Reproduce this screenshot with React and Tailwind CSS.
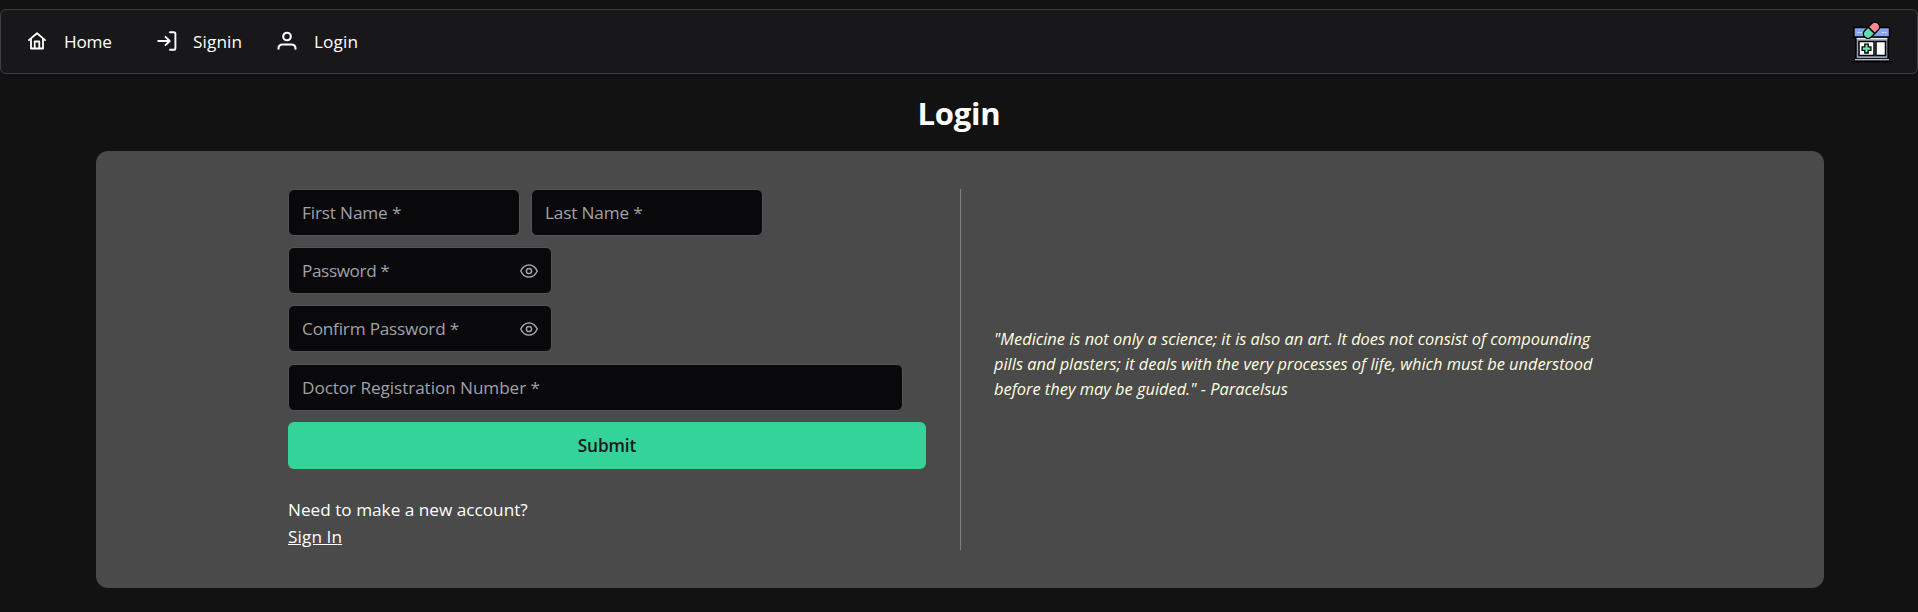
const field =
  "flex h-[47px] items-center justify-between rounded-md border border-[#52525b] bg-[#09090b] px-[13px] text-[17.2px] text-[#a1a1aa]";

function HomeIcon() {
  return (
    <svg className="size-[18px] shrink-0" viewBox="0 0 18 18" fill="none" stroke="#fff" strokeWidth="1.8" strokeLinejoin="round" strokeLinecap="round">
      <path d="M.9 8.100 9 1.300l8.100 6.800M3 6.800v9.700h12V6.800M6.700 16.500V9.500h4.600v7" />
    </svg>
  );
}

function SigninIcon() {
  return (
    <svg className="size-5 shrink-0" viewBox="0 0 20 20" fill="none" stroke="#fff" strokeWidth="1.900" strokeLinejoin="round" strokeLinecap="round">
      <path d="M1.200 10h11.300M8.500 5.800l4.200 4.200-4.200 4.200M13 1.200h3.800q1.600 0 1.600 1.600v14.400q0 1.600-1.600 1.600H13" />
    </svg>
  );
}

function UserIcon() {
  return (
    <svg className="size-5 shrink-0" viewBox="0 0 20 20" fill="none" stroke="#fff" strokeWidth="2.100" strokeLinecap="round">
      <circle cx="10" cy="5.500" r="3.800" />
      <path d="M1.500 17.800v-.5q0-3.800 4.500-3.800h8q4.500 0 4.500 3.800v.5" />
    </svg>
  );
}

function EyeIcon() {
  return (
    <svg className="h-[14px] w-[18px] shrink-0" viewBox="0 0 18 14" fill="none" stroke="#a1a1aa" strokeWidth="1.500">
      <path d="M.8 7C2.500 3 5.300.9 9 .9S15.500 3 17.200 7C15.500 11 12.700 13.100 9 13.100S2.500 11 .8 7Z" />
      <circle cx="9" cy="7" r="2.600" />
    </svg>
  );
}

function PharmacyLogo() {
  return (
    <svg className="h-[42px] w-[42px]" viewBox="0 0 42 42">
      <path d="M5 16h32v22H5z" fill="#98a2b0" stroke="#000" strokeWidth="1.400" />
      <path d="M5.700 16.500h30.600v1.800H5.700z" fill="#e6ebf2" />
      <path d="M3 6.500h35.500v9.500H3z" fill="#82a6f2" stroke="#000" strokeWidth="1.400" />
      <path d="M6.500 11.500h4.500M31 11.500h4.500" stroke="#dbe7ff" strokeWidth="1.200" strokeDasharray="2 1" />
      <path d="M8 20.500h15v14H8zM25 20.500h9.500v14H25z" fill="#fff" stroke="#000" strokeWidth="1.500" />
      <path d="M13.800 23.200h3.400v2.700h2.700v3.400h-2.700V32h-3.400v-2.700h-2.700v-3.400h2.700z" fill="#6ee7b7" stroke="#000" strokeWidth="1.300" />
      <g transform="translate(20.500 9.300) rotate(-45)" stroke="#000" strokeWidth="1.400">
        <path d="M0-4.600h-4.900a4.600 4.600 0 0 0 0 9.200H0z" fill="#5ee0b0" />
        <path d="M0-4.600h4.900a4.600 4.600 0 0 1 0 9.200H0z" fill="#fb8799" />
      </g>
      <path d="M3.500 37.500h35v2.300h-35z" fill="#b4bdca" stroke="#000" strokeWidth=".8" />
      <path d="M.5 40.700h41" stroke="#000" strokeWidth="1.400" />
    </svg>
  );
}

export default function App() {
  return (
    <div className="min-h-[612px] bg-[#121212] pt-[9px] font-['Open_Sans',sans-serif] text-[17.2px] text-white">
      <nav className="flex h-[65px] items-center rounded-md border border-[#3f3f46] bg-[#18181b] pr-[24px] pl-[27px]">
        <a className="flex items-center">
          <HomeIcon />
          <span className="ml-[18px] w-[93px] tracking-[-0.2px]">Home</span>
        </a>
        <a className="flex items-center">
          <SigninIcon />
          <span className="ml-[16px] w-[84px] tracking-[0.1px]">Signin</span>
        </a>
        <a className="flex items-center">
          <UserIcon />
          <span className="ml-[17px] tracking-[0.1px]">Login</span>
        </a>
        <div className="ml-auto">
          <PharmacyLogo />
        </div>
      </nav>

      <h1 className="flex h-[77px] items-center justify-center pt-px text-[31px] font-bold tracking-[-0.2px]">Login</h1>

      <main className="mx-24 flex h-[437px] w-[1728px] rounded-xl bg-[#4a4a4a] py-[38px] pl-48">
        <form className="flex h-[361px] w-[673px] flex-col border-r border-[#808080]">
          <div className="flex gap-[11px]">
            <div className={field + " w-[232px]"}>
              <span className="tracking-[-0.15px]">First Name *</span>
            </div>
            <div className={field + " w-[232px]"}>
              <span className="tracking-[-0.15px]">Last Name *</span>
            </div>
          </div>
          <div className={field + " mt-[11px] w-[264px]"}>
            <span className="tracking-[-0.4px]">Password *</span>
            <EyeIcon />
          </div>
          <div className={field + " mt-[11px] w-[264px]"}>
            <span className="tracking-[-0.2px]">Confirm Password *</span>
            <EyeIcon />
          </div>
          <div className={field + " mt-[12px] w-[615px]"}>
            <span className="tracking-[-0.08px]">Doctor Registration Number *</span>
          </div>
          <button type="button" className="mt-[11px] h-[47px] w-[638px] rounded-md bg-[#34d399] text-[17.2px] font-semibold tracking-[-0.1px] text-[#18181b]">
            Submit
          </button>
          <p className="mt-[27px] leading-[27px]">Need to make a new account?</p>
          <a className="self-start leading-[27px] tracking-[0.1px] underline">Sign In</a>
        </form>
        <blockquote className="flex flex-col justify-center pb-[12px] pl-[33px] text-[16.4px] leading-[25px] text-[#ffffe0] italic">
          <p className="whitespace-nowrap">"Medicine is not only a science; it is also an art. It does not consist of compounding</p>
          <p className="whitespace-nowrap">pills and plasters; it deals with the very processes of life, which must be understood</p>
          <p className="whitespace-nowrap">before they may be guided." - Paracelsus</p>
        </blockquote>
      </main>
    </div>
  );
}
